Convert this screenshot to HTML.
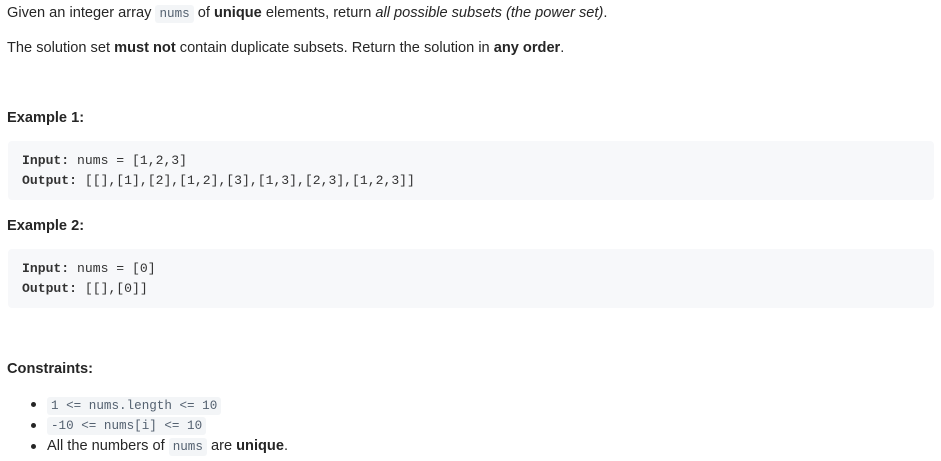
<!DOCTYPE html>
<html><head><style>
body{margin:0;width:941px;height:461px;background:#fff;font-family:"Liberation Sans",sans-serif;font-size:14.6px;color:#262626;position:relative;overflow:hidden}
.t{position:absolute;left:7px;white-space:nowrap;line-height:20px}
code{font-family:"Liberation Mono",monospace;font-size:12.6px;color:#546170;background:#f3f5f7;border-radius:3px;padding:2px 4px}
.pre{position:absolute;left:8px;width:926px;height:59px;background:#f7f8fa;border-radius:4px}
.pl{position:absolute;left:14px;font-family:"Liberation Mono",monospace;font-size:13.1px;color:#333;white-space:nowrap;line-height:20px}
.dot{position:absolute;left:31px;width:5px;height:5px;border-radius:50%;background:#262626}
</style></head><body>
<div class="t" style="top:3px">Given an integer array <code>nums</code> of <b>unique</b> elements, return <i>all possible subsets (the power set)</i>.</div>
<div class="t" style="top:38px">The solution set <b>must not</b> contain duplicate subsets. Return the solution in <b>any order</b>.</div>
<div class="t" style="top:108px"><b>Example 1:</b></div>
<div class="pre" style="top:141px"><div class="pl" style="top:10px"><b>Input:</b> nums = [1,2,3]</div><div class="pl" style="top:30px"><b>Output:</b> [[],[1],[2],[1,2],[3],[1,3],[2,3],[1,2,3]]</div></div>
<div class="t" style="top:216px"><b>Example 2:</b></div>
<div class="pre" style="top:249px"><div class="pl" style="top:10px"><b>Input:</b> nums = [0]</div><div class="pl" style="top:30px"><b>Output:</b> [[],[0]]</div></div>
<div class="t" style="top:359px"><b>Constraints:</b></div>
<div class="dot" style="top:402px"></div><div class="t" style="left:47px;top:395px"><code>1 &lt;= nums.length &lt;= 10</code></div>
<div class="dot" style="top:423px"></div><div class="t" style="left:47px;top:415px"><code>-10 &lt;= nums[i] &lt;= 10</code></div>
<div class="dot" style="top:444px"></div><div class="t" style="left:47px;top:436px">All the numbers of <code>nums</code> are <b>unique</b>.</div>
</body></html>
